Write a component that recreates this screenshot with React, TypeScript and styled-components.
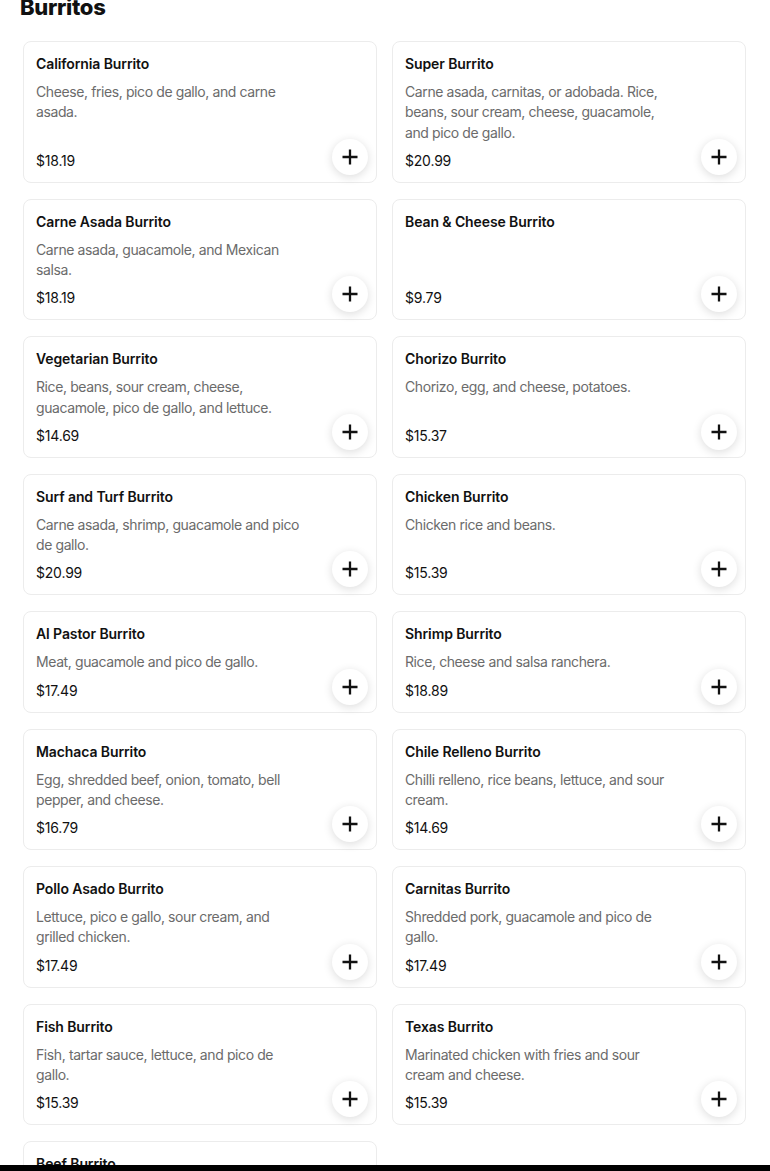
import styled, { createGlobalStyle } from 'styled-components'
import { FC } from 'react'

type Item = {
  name: string
  desc?: string
  price: string
}

const items: Item[] = [
  { name: 'California Burrito', desc: 'Cheese, fries, pico de gallo, and carne asada.', price: '$18.19' },
  { name: 'Super Burrito', desc: 'Carne asada, carnitas, or adobada. Rice, beans, sour cream, cheese, guacamole, and pico de gallo.', price: '$20.99' },
  { name: 'Carne Asada Burrito', desc: 'Carne asada, guacamole, and Mexican salsa.', price: '$18.19' },
  { name: 'Bean & Cheese Burrito', price: '$9.79' },
  { name: 'Vegetarian Burrito', desc: 'Rice, beans, sour cream, cheese, guacamole, pico de gallo, and lettuce.', price: '$14.69' },
  { name: 'Chorizo Burrito', desc: 'Chorizo, egg, and cheese, potatoes.', price: '$15.37' },
  { name: 'Surf and Turf Burrito', desc: 'Carne asada, shrimp, guacamole and pico de gallo.', price: '$20.99' },
  { name: 'Chicken Burrito', desc: 'Chicken rice and beans.', price: '$15.39' },
  { name: 'Al Pastor Burrito', desc: 'Meat, guacamole and pico de gallo.', price: '$17.49' },
  { name: 'Shrimp Burrito', desc: 'Rice, cheese and salsa ranchera.', price: '$18.89' },
  { name: 'Machaca Burrito', desc: 'Egg, shredded beef, onion, tomato, bell pepper, and cheese.', price: '$16.79' },
  { name: 'Chile Relleno Burrito', desc: 'Chilli relleno, rice beans, lettuce, and sour cream.', price: '$14.69' },
  { name: 'Pollo Asado Burrito', desc: 'Lettuce, pico e gallo, sour cream, and grilled chicken.', price: '$17.49' },
  { name: 'Carnitas Burrito', desc: 'Shredded pork, guacamole and pico de gallo.', price: '$17.49' },
  { name: 'Fish Burrito', desc: 'Fish, tartar sauce, lettuce, and pico de gallo.', price: '$15.39' },
  { name: 'Texas Burrito', desc: 'Marinated chicken with fries and sour cream and cheese.', price: '$15.39' },
  { name: 'Beef Burrito', desc: 'Beef, rice and beans.', price: '$15.39' },
]

const GlobalStyle = createGlobalStyle`
  html {
    background: #000;
  }
  body {
    margin: 0;
    background: #000;
    font-family: Inter, "Noto Sans", sans-serif;
    color: #000;
  }
`

const PlusIcon = () => (
  <svg width='16' height='16' viewBox='0 0 16 16' fill='none'>
    <path d='M8 0.5v15M0.5 8h15' stroke='#111' strokeWidth='2.3' />
  </svg>
)

const MenuCard: FC<{ item: Item }> = ({ item }) => (
  <Card>
    <Title>{item.name}</Title>
    {item.desc && <Desc>{item.desc}</Desc>}
    <Price>{item.price}</Price>
    <AddButton aria-label='Add'>
      <PlusIcon />
    </AddButton>
  </Card>
)

export default function App() {
  return (
    <>
      <GlobalStyle />
      <Page>
        <Heading>Burritos</Heading>
        <Grid>
          {items.map((item) => (
            <MenuCard key={item.name} item={item} />
          ))}
        </Grid>
      </Page>
    </>
  )
}

const Page = styled.div`
  height: 1165px;
  overflow: hidden;
  background: #fff;
  padding: 0 24px 0 23px;
  box-sizing: border-box;
`

const Heading = styled.h2`
  margin: -8px 0 0 -3px;
  font-size: 22px;
  line-height: 30px;
  font-weight: 800;
  letter-spacing: -0.3px;
  color: #111;
`

const Grid = styled.div`
  margin-top: 19px;
  display: grid;
  grid-template-columns: 1fr 1fr;
  column-gap: 15px;
  row-gap: 16px;
`

const Card = styled.div`
  position: relative;
  display: flex;
  flex-direction: column;
  box-sizing: border-box;
  padding: 12px 12px 11px 12px;
  border: 1px solid #ececec;
  border-radius: 8px;
  background: #fff;
`

const Title = styled.div`
  font-size: 14px;
  line-height: 20px;
  font-weight: 600;
  letter-spacing: -0.1px;
  color: #111;
`

const Desc = styled.div`
  margin-top: 8px;
  max-width: 272px;
  font-size: 14px;
  line-height: 20.25px;
  letter-spacing: -0.4px;
  color: #6b6b6b;
`

const Price = styled.div`
  margin-top: auto;
  padding-top: 8px;
  font-size: 14px;
  line-height: 20px;
  letter-spacing: -0.2px;
  color: #111;
`

const AddButton = styled.button`
  all: unset;
  position: absolute;
  right: 8px;
  bottom: 7px;
  width: 36px;
  height: 36px;
  border-radius: 50%;
  background: #fff;
  box-shadow: 0 2px 10px rgba(0, 0, 0, 0.14);
  display: flex;
  align-items: center;
  justify-content: center;
`
